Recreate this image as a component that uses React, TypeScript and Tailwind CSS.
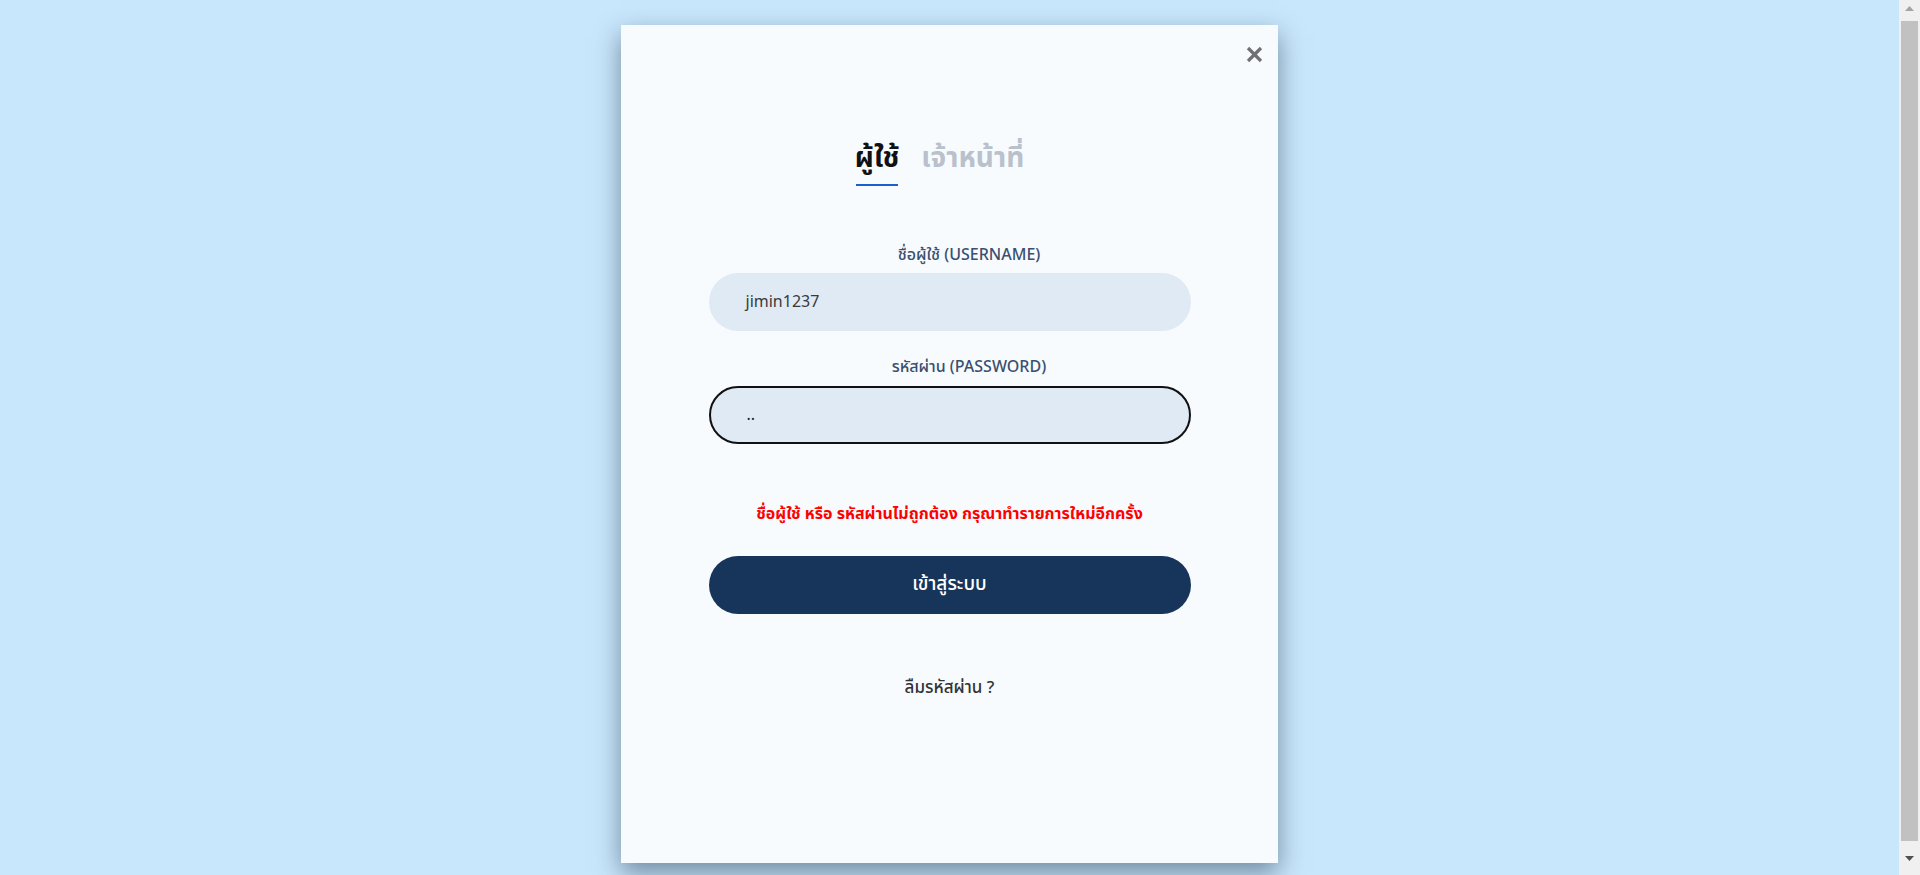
import React from "react";

export default function App() {
  const font = { fontFamily: '"Noto Sans Thai", "Noto Sans", "Open Sans", sans-serif' };
  return (
    <div className="min-h-[875px] h-[875px] bg-[#c8e6fc] flex overflow-hidden" style={font}>
      <div className="flex-1 flex justify-center">
        <div className="relative mt-[25px] w-[657px] h-[838px] bg-[#f7fbfe] shadow-[0_10px_24px_rgba(30,50,70,0.5)] flex flex-col items-center">
          <button className="absolute right-[14px] top-[20px] w-[19px] h-[19px] flex items-center justify-center" aria-label="close">
            <svg width="19" height="19" viewBox="0 0 19 19">
              <path d="M3 3 L16 16 M16 3 L3 16" stroke="#707075" strokeWidth="3.2" strokeLinecap="butt" />
            </svg>
          </button>

          <div className="mt-[112px] mr-[20px] flex items-start gap-[22px]">
            <div className="flex flex-col items-center">
              <span className="text-[28px] leading-[44px] font-bold text-[#111]">ผู้ใช้</span>
              <span className="mt-[3px] w-[42px] h-[2px] bg-[#1a5fd0]" />
            </div>
            <span className="text-[28px] leading-[44px] font-bold text-[#b9c1cc]">เจ้าหน้าที่</span>
          </div>

          <div className="mt-[59px] w-[482px] flex flex-col items-center">
            <label className="pl-[39px] text-[16px] leading-[20px] font-medium text-[#3b4f6e]">ชื่อผู้ใช้ (USERNAME)</label>
            <div className="mt-[8px] w-full h-[58px] rounded-full bg-[#dfeaf4] flex items-center pl-[37px] text-[16px] text-[#3a3a3a]">
              jimin1237
            </div>

            <label className="mt-[26px] pl-[39px] text-[16px] leading-[20px] font-medium text-[#3b4f6e]">รหัสผ่าน (PASSWORD)</label>
            <div className="mt-[9px] w-full h-[58px] rounded-full bg-[#dfeaf4] border-2 border-[#111] flex items-center pl-[36px] text-[16px] text-[#222]">
              ..
            </div>

            <p className="mt-[58px] text-[16px] leading-[24px] font-bold text-[#ff0000]">
              ชื่อผู้ใช้ หรือ รหัสผ่านไม่ถูกต้อง กรุณาทำรายการใหม่อีกครั้ง
            </p>

            <button className="mt-[30px] w-full h-[58px] rounded-full bg-[#17345a] text-white text-[19px] font-medium">
              เข้าสู่ระบบ
            </button>

            <span className="mt-[62px] text-[17px] leading-[24px] font-medium text-[#333]">ลืมรหัสผ่าน ?</span>
          </div>
        </div>
      </div>

      <div className="w-[21px] h-full bg-[#f0f0f0] flex flex-col items-center">
        <div className="h-[17px] w-full flex items-center justify-center">
          <svg width="9" height="5" viewBox="0 0 9 5"><path d="M0 5 L4.5 0 L9 5 Z" fill="#a3a3a3" /></svg>
        </div>
        <div className="mt-[4px] w-[17px] h-[820px] bg-[#c1c1c1]" />
        <div className="flex-1 w-full flex items-center justify-center">
          <svg width="9" height="5" viewBox="0 0 9 5"><path d="M0 0 L9 0 L4.5 5 Z" fill="#505050" /></svg>
        </div>
      </div>
    </div>
  );
}
